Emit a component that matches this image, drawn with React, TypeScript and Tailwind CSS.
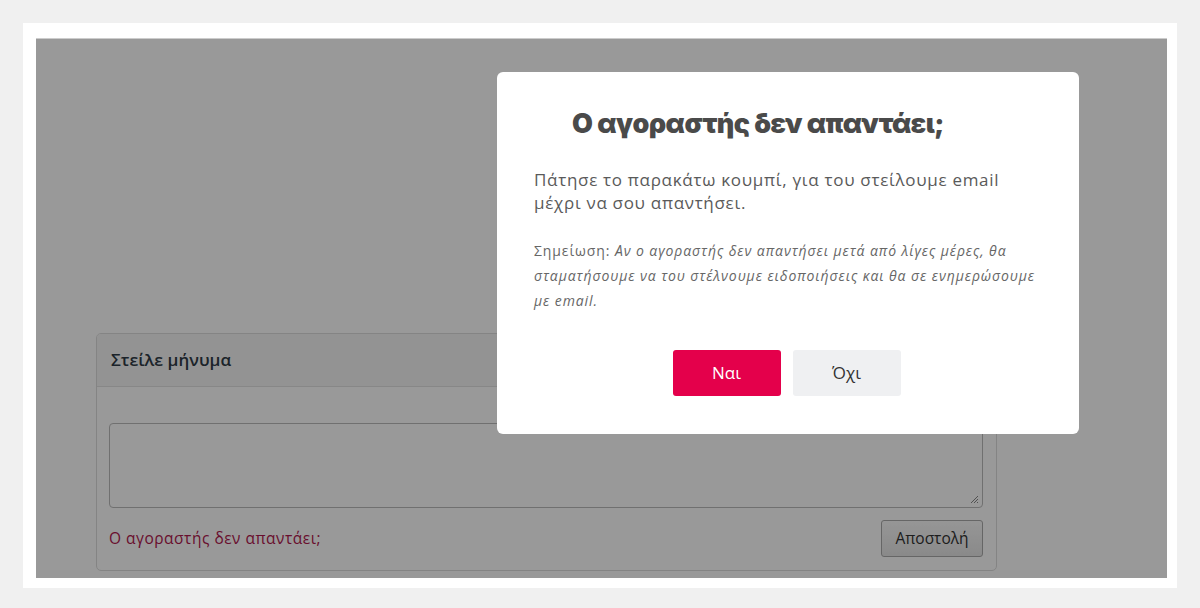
import React from "react";

export default function App() {
  return (
    <div className="w-[1200px] h-[608px] bg-[#f0f0f0] pt-[23px] pl-[23px] pr-[23px] overflow-hidden">
      <div className="w-[1154px] h-[565px] bg-white pt-[15px] pl-[13px] pr-[10px] pb-[10px]">
        <div className="relative w-[1131px] h-[540px] bg-white border-t border-[#ccc]" style={{ fontFamily: "'Open Sans', 'Noto Sans', sans-serif" }}>
          <div className="pt-[294px] pl-[60px]">
            <div className="w-[901px] h-[238px] border border-[#ddd] rounded-[5px] overflow-hidden">
              <div className="h-[53px] bg-[#f5f5f5] border-b border-[#e2e2e2] flex items-center px-[14px]">
                <span className="text-[17px] font-semibold text-[#2f3b46]">Στείλε μήνυμα</span>
              </div>
              <div className="pt-[36px] pl-[12px] pr-[13px]">
                <div className="relative h-[85px] border border-[#bbb] rounded-[4px] bg-white">
                  <svg className="absolute right-[3px] bottom-[3px]" width="10" height="10" viewBox="0 0 10 10">
                    <path d="M9 2 L2 9 M9 5 L5 9 M9 8 L8 9" stroke="#888" strokeWidth="1" />
                  </svg>
                </div>
                <div className="flex items-center justify-between mt-[12px]">
                  <span className="text-[15.5px] tracking-[0.5px] text-[#b0184e]">Ο αγοραστής δεν απαντάει;</span>
                  <button className="w-[102px] h-[37px] rounded-[3px] border border-[#aaa] bg-gradient-to-b from-[#fafafa] to-[#e6e6e6] text-[15.5px] text-[#333]">Αποστολή</button>
                </div>
              </div>
            </div>
          </div>
          <div className="absolute inset-0 bg-black/40" />
          <div className="absolute left-[461px] top-[33px] w-[582px] h-[362px] bg-white rounded-[6px] pt-[35px] pl-[37px] pr-[35px]">
            <h2 className="text-center pr-[62px] text-[27px] leading-[34px] font-black text-[#4a4a4a] tracking-[-0.6px]" style={{ fontFamily: "Inter, 'Noto Sans', sans-serif" }}>
              Ο αγοραστής δεν απαντάει;
            </h2>
            <p className="mt-[27px] w-[490px] text-[17px] leading-[23px] tracking-[0.7px] text-[#5a5a5a]">
              Πάτησε το παρακάτω κουμπί, για του στείλουμε email μέχρι να σου απαντήσει.
            </p>
            <p className="mt-[24px] w-[510px] text-[14px] leading-[25px] tracking-[0.9px] text-[#666]">
              Σημείωση: <i>Αν ο αγοραστής δεν απαντήσει μετά από λίγες μέρες, θα σταματήσουμε να του στέλνουμε ειδοποιήσεις και θα σε ενημερώσουμε με email.</i>
            </p>
            <div className="mt-[37px] flex justify-center gap-[12px] pr-[5px]">
              <button className="w-[108px] h-[46px] rounded-[3px] bg-[#e4004b] text-white text-[17px]">Ναι</button>
              <button className="w-[108px] h-[46px] rounded-[3px] bg-[#eff0f2] text-[#333] text-[17px]">Όχι</button>
            </div>
          </div>
        </div>
      </div>
    </div>
  );
}
